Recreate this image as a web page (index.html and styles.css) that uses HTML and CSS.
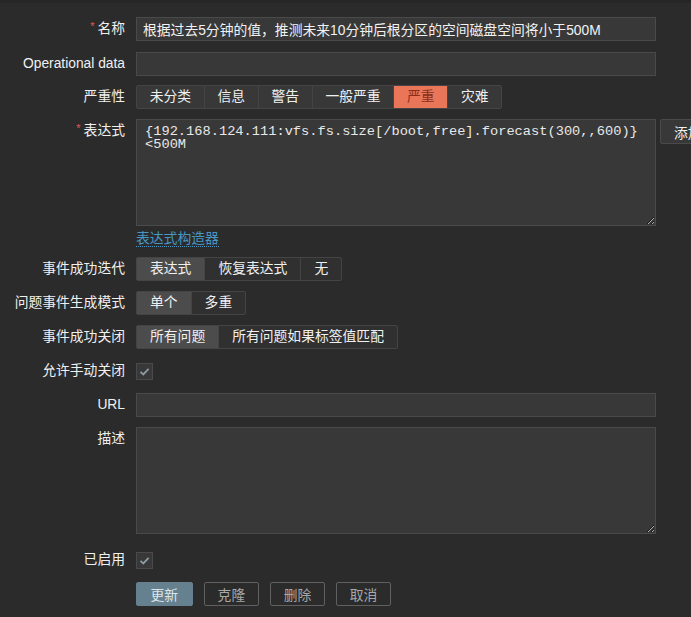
FILE: index.html
```html
<!DOCTYPE html>
<html lang="zh">
<head>
<meta charset="utf-8">
<link rel="stylesheet" href="styles.css">
</head>
<body>
<div class="topbar"></div>
<form class="form">
  <div class="row row-first">
    <label class="lbl"><span class="req">*</span>名称</label>
    <input class="text" type="text" value="根据过去5分钟的值，推测未来10分钟后根分区的空间磁盘空间将小于500M">
  </div>
  <div class="row row-op">
    <label class="lbl">Operational data</label>
    <input class="text" type="text" value="">
  </div>
  <div class="row row-sev">
    <label class="lbl">严重性</label>
    <div class="seg seg-sev">
      <span class="opt">未分类</span><span class="opt">信息</span><span class="opt">警告</span><span class="opt">一般严重</span><span class="opt on-high">严重</span><span class="opt">灾难</span>
    </div>
  </div>
  <div class="row row-expr">
    <label class="lbl lbl-top"><span class="req">*</span>表达式</label>
    <textarea class="area mono">{192.168.124.111:vfs.fs.size[/boot,free].forecast(300,,600)}
&lt;500M</textarea>
    <button type="button" class="btn-add">添加</button>
  </div>
  <div class="row row-link">
    <span></span>
    <div><a class="link">表达式构造器</a></div>
  </div>
  <div class="row">
    <label class="lbl">事件成功迭代</label>
    <div class="seg">
      <span class="opt on">表达式</span><span class="opt">恢复表达式</span><span class="opt">无</span>
    </div>
  </div>
  <div class="row">
    <label class="lbl">问题事件生成模式</label>
    <div class="seg">
      <span class="opt on">单个</span><span class="opt">多重</span>
    </div>
  </div>
  <div class="row">
    <label class="lbl">事件成功关闭</label>
    <div class="seg">
      <span class="opt on">所有问题</span><span class="opt">所有问题如果标签值匹配</span>
    </div>
  </div>
  <div class="row row-check">
    <label class="lbl">允许手动关闭</label>
    <span class="check"><svg viewBox="0 0 17 17" width="17" height="17"><path d="M4.5 8.8 L7.3 11.4 L12.6 5.8" fill="none" stroke="#8d9ba3" stroke-width="1.8"/></svg></span>
  </div>
  <div class="row">
    <label class="lbl">URL</label>
    <input class="text" type="text" value="">
  </div>
  <div class="row row-desc">
    <label class="lbl lbl-top">描述</label>
    <textarea class="area"></textarea>
  </div>
  <div class="row row-check row-enabled">
    <label class="lbl">已启用</label>
    <span class="check"><svg viewBox="0 0 17 17" width="17" height="17"><path d="M4.5 8.8 L7.3 11.4 L12.6 5.8" fill="none" stroke="#8d9ba3" stroke-width="1.8"/></svg></span>
  </div>
  <div class="row row-btns">
    <span></span>
    <div class="btns">
      <button type="button" class="btn primary">更新</button>
      <button type="button" class="btn">克隆</button>
      <button type="button" class="btn">删除</button>
      <button type="button" class="btn">取消</button>
    </div>
  </div>
</form>
</body>
</html>
```

FILE: styles.css
```css
html, body {
  margin: 0;
  padding: 0;
  background: #2b2b2b;
  overflow: hidden;
}
body {
  width: 691px;
  height: 617px;
  font-family: "Liberation Sans", Arial, "Noto Sans CJK SC", sans-serif;
  font-size: 13.8px;
  color: #f2f2f2;
}
.topbar {
  height: 3px;
  background: #262626;
}
.form {
  padding-top: 14px;
}
.row {
  display: grid;
  grid-template-columns: 125px 520px auto;
  column-gap: 11px;
  align-items: center;
  margin-bottom: 10px;
  min-height: 24px;
}
.row-first { margin-bottom: 11px; }
.row-op { margin-bottom: 9px; }
.lbl {
  text-align: right;
  line-height: 24px;
  white-space: nowrap;
  color: #f0f0f0;
}
.lbl-top {
  align-self: start;
}
.req {
  color: #e45959;
  font-size: 11px;
  margin-right: 3px;
  position: relative;
  top: -3px;
}
.text {
  box-sizing: border-box;
  height: 24px;
  width: 520px;
  margin: 0;
  padding: 0 6px;
  background: #383838;
  border: 1px solid #4a4a4a;
  color: #f2f2f2;
  font: inherit;
  outline: none;
}
.seg {
  display: inline-flex;
  justify-self: start;
  border: 1px solid #444;
  border-radius: 2px;
  background: #303030;
  height: 24px;
  box-sizing: border-box;
}
.opt {
  padding: 0 13px;
  line-height: 22px;
  color: #f0f0f0;
  border-left: 1px solid #444;
  white-space: nowrap;
}
.opt:first-child { border-left: none; }
.opt.on { background: #4c4c4c; }
.seg-sev { background: #383838; }
.seg-sev .opt { padding: 0 12.7px; }
.opt.on-high {
  background: #e97659;
  color: #8a2f1c;
}
.area {
  box-sizing: border-box;
  width: 520px;
  height: 107px;
  margin: 0;
  padding: 4px 8px;
  background: #383838;
  border: 1px solid #4a4a4a;
  color: #f2f2f2;
  font: inherit;
  outline: none;
  resize: vertical;
  color-scheme: dark;
}
.mono {
  font-family: "Liberation Mono", "Courier New", monospace;
  font-size: 13.7px;
  line-height: 13px;
  color: #e8e8e8;
  padding-top: 5px;
}
.row-expr { align-items: start; margin-bottom: 4px; }
.btn-add {
  margin-left: -7px;
  box-sizing: border-box;
  height: 25px;
  padding: 0 13px;
  background: #383838;
  border: 1px solid #4a4a4a;
  border-radius: 2px;
  color: #f2f2f2;
  font: inherit;
  justify-self: start;
  white-space: nowrap;
}
.row-link { min-height: 18px; margin-bottom: 9px; }
.link {
  color: #4796c4;
  border-bottom: 1px dotted #4796c4;
  line-height: 15px;
  display: inline-block;
}
.row-check { margin-bottom: 10px; }
.check {
  box-sizing: border-box;
  width: 17px;
  height: 17px;
  background: #383838;
  border: 1px solid #4a4a4a;
  display: block;
  justify-self: start;
}
.check svg { display: block; margin: -1px; }
.row-desc { align-items: start; margin-bottom: 14px; }
.row-enabled { margin-bottom: 10px; }
.btns {
  display: flex;
  gap: 11.5px;
}
.btn {
  box-sizing: border-box;
  height: 24px;
  padding: 0 12.5px;
  background: transparent;
  border: 1px solid #606060;
  border-radius: 2px;
  color: #a8a8a8;
  font: inherit;
  white-space: nowrap;
}
.btn.primary {
  background: #65818f;
  border-color: #65818f;
  color: #dde5e9;
  padding: 0 13.5px;
}
```
